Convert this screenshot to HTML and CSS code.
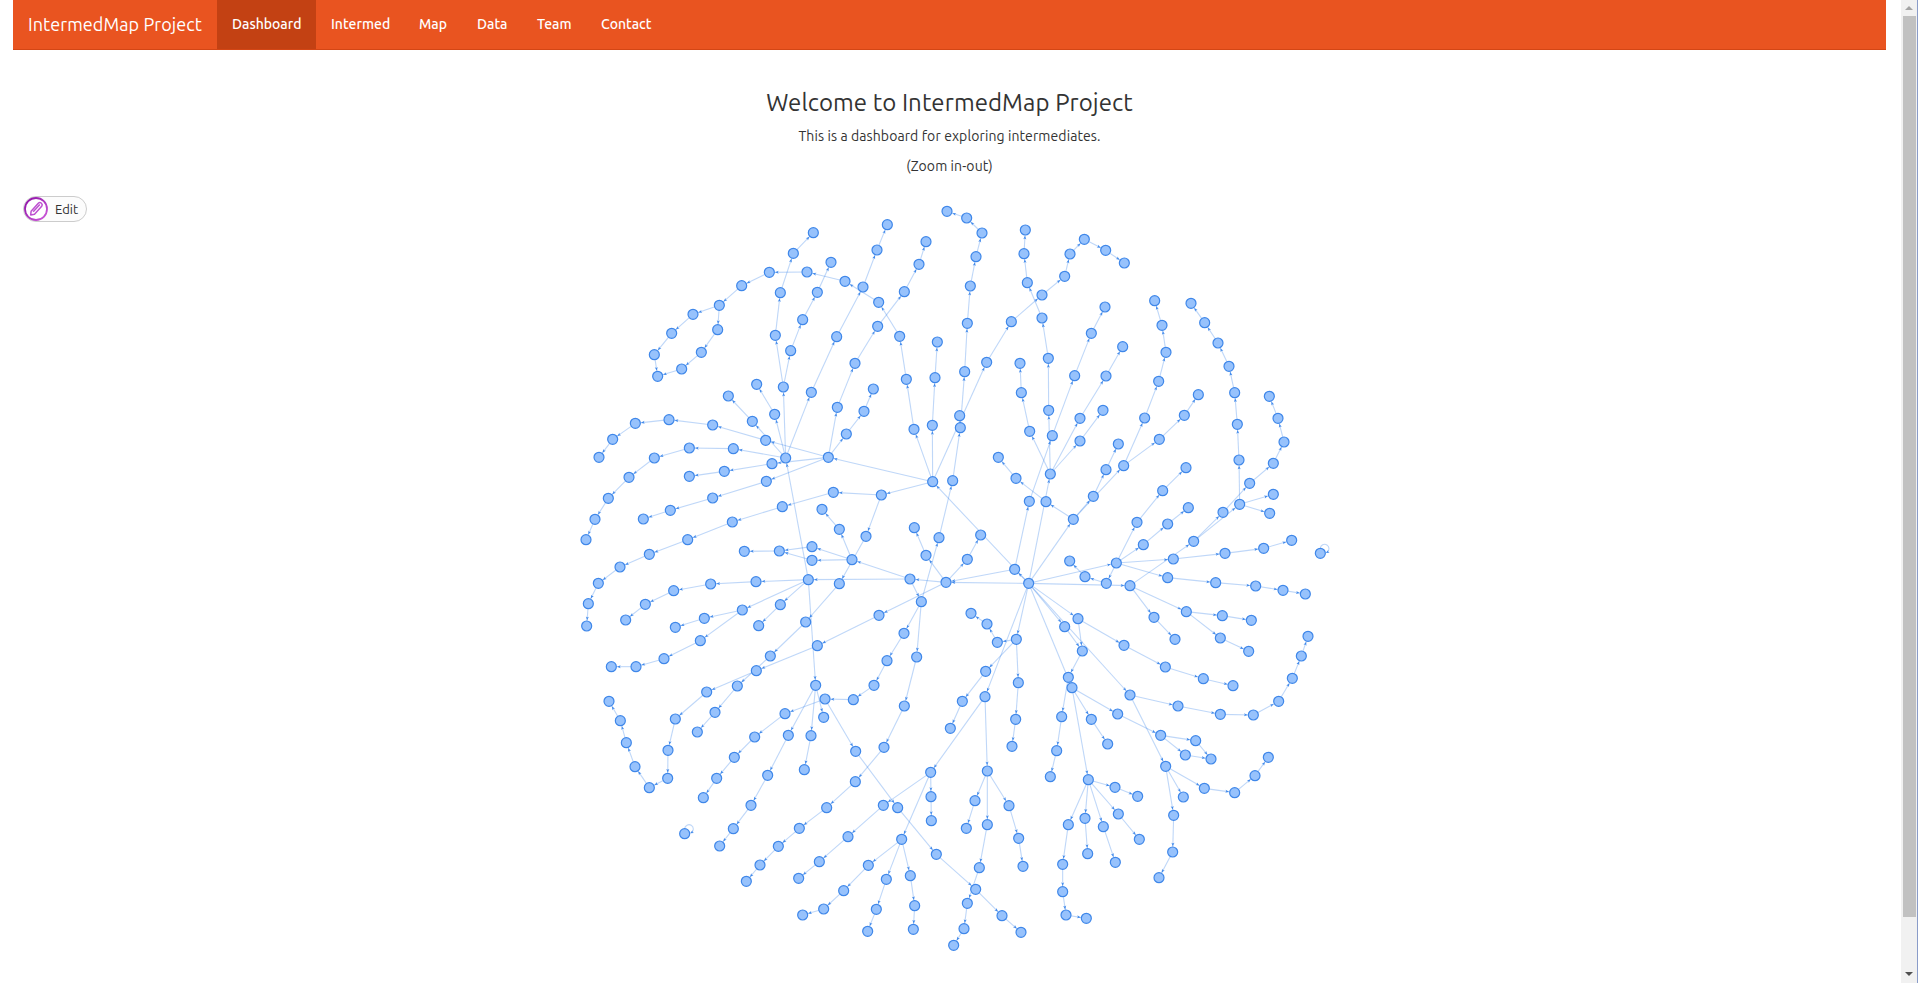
FILE: index.html
```
<!DOCTYPE html>
<html lang="en">
<head>
<meta charset="utf-8">
<title>IntermedMap Project</title>
<link rel="stylesheet" href="styles.css">
</head>
<body>
<div class="window">
  <div class="page">
    <nav class="navbar">
      <a class="brand"><span>IntermedMap Project</span></a>
      <a class="tab active"><span>Dashboard</span></a>
      <a class="tab intermed"><span>Intermed</span></a>
      <a class="tab map"><span>Map</span></a>
      <a class="tab data"><span>Data</span></a>
      <a class="tab team"><span>Team</span></a>
      <a class="tab contact"><span>Contact</span></a>
    </nav>
    <header class="intro">
      <h3>Welcome to IntermedMap Project</h3>
      <p class="lead">This is a dashboard for exploring intermediates.</p>
      <p class="hint">(Zoom in-out)</p>
    </header>
    <main class="network">
      <svg id="graph" class="graph" viewBox="-1641 0 5619 2340"></svg>
      <button class="edit" type="button">
        <svg class="pencil" viewBox="0 0 24 24">
          <defs><linearGradient id="violet" x1="0" y1="0" x2="1" y2="1"><stop offset="0" stop-color="#8b0fa5"/><stop offset="1" stop-color="#cf5ddb"/></linearGradient></defs>
          <circle cx="12" cy="12" r="11" fill="#fff" stroke="url(#violet)" stroke-width="1.8"/>
          <path d="M6.7 17.9l.4-3.6 7.2-8c.8-.9 2-1 2.8-.3l.5.5c.8.8.8 1.8.1 2.7l-7.2 8zM9.2 14.8l6.6-7.2" fill="none" stroke="#bd50d0" stroke-width="1.5" stroke-linejoin="round"/>
        </svg>
        <span>Edit</span>
      </button>
    </main>
  </div>
  <div class="scrollbar">
    <i class="arrow up"></i>
    <div class="thumb"></div>
    <i class="arrow down"></i>
  </div>
</div>
<script src="graph.js"></script>
</body>
</html>
```
FILE: styles.css
```
* { box-sizing: border-box; }
body {
  margin: 0;
  background: #fff;
  color: #333;
  font-family: Ubuntu, "Noto Sans", sans-serif;
  font-size: 14px;
  overflow: hidden;
}
.window { display: flex; height: 983px; }
.page { flex: 1; padding: 0 15px 0 13px; overflow: hidden; }
.navbar {
  display: flex;
  height: 50px;
  background: #e95420;
  border-bottom: 1px solid #d34615;
  color: #fff;
}
.navbar a { display: flex; padding: 14px 0 0 15px; line-height: 20px; white-space: nowrap; }
.navbar .brand { width: 204px; font-size: 18px; letter-spacing: 0.1px; }
.tab { font-weight: 500; }
.active { width: 99px; background: #c34113; }
.intermed { width: 88px; }
.map { width: 58px; }
.data { width: 60px; }
.team { width: 64px; }
.contact { width: 82px; }
.intro { height: 140px; padding-top: 39px; text-align: center; }
.intro h3 { margin: 0; font-size: 24px; font-weight: 400; line-height: 28px; letter-spacing: 0.08px; }
.intro p { margin: 0; line-height: 20px; letter-spacing: 0.1px; }
.intro .lead { margin-top: 9px; }
.intro .hint { margin-top: 10px; }
.network { position: relative; height: 793px; }
.graph { display: block; width: 1873px; height: 780px; }
.edge { stroke: #2b7ce9; stroke-opacity: 0.3; stroke-width: 3.3; fill: none; }
.tip { fill: #2b7ce9; fill-opacity: 0.85; }
.node { fill: #97c2fc; stroke: #3f87e9; stroke-width: 3.6; }
.edit {
  position: absolute;
  left: 10px;
  top: 6px;
  display: flex;
  align-items: center;
  width: 64px;
  height: 26px;
  padding: 0;
  border: 1px solid #ccc;
  border-radius: 13px;
  background: #fcfcfc;
  color: #333;
  font: 13px/24px Ubuntu, "Noto Sans", sans-serif;
}
.pencil { width: 24px; height: 24px; margin-right: 7px; flex: none; }
.scrollbar {
  display: flex;
  flex-direction: column;
  align-items: center;
  width: 17px;
  background: #f1f1f1;
  border-right: 1px solid #8a9cc9;
}
.thumb { width: 13px; height: 901px; margin: 0 0 55px 1px; background: #c1c1c1; }
.arrow { width: 0; height: 0; border: 4px solid transparent; }
.up { margin: 2px 0 6px; border-bottom-color: #a3a3a3; }
.down { border-top-color: #505050; }
```
FILE: graph.js
```
// Each line is a directed path; every "x,y" pair is one node.
const paths = `
1406,1180 1364,1138 1158,1177 1050,1167 745,1169 677,804
1406,1180 1158,1177
1406,1180 1118,875
1118,875 805,802
1118,875 964,915
1050,1167 876,1109
1050,1167 1084,1235
1158,1177 1222,1108 1262,1035
1084,1235 1137,1043 1178,872 1201,713 1214,545 1222,400 1231,288 1248,200 1266,129 1220,84 1161,64
1201,713 1199,677
1118,875 1280,517 1354,395 1446,315 1514,259 1530,192 1573,148 1637,181 1693,219
1118,875 1117,706 1125,563 1132,456
1118,875 1062,718 1039,568 1019,439 956,337 855,274 741,246 628,247 545,287 478,346 399,373 335,430 283,494 293,559
478,346 473,419 424,487 365,537 293,559
805,802 832,652 885,520 953,409 1033,305 1077,223 1098,155
805,802 859,732 912,664 940,597
677,804 754,607 830,440 909,291 951,180 982,104
677,804 670,591 692,482 728,389 772,307 813,217
670,591 646,436 661,308 700,190 760,128
677,804 644,673 590,583
677,804 577,694 505,618
805,802 617,751 458,705 327,689 226,700 158,748 117,802
677,804 520,776 388,774 283,804 207,862 145,925 105,988 78,1049
805,802 636,821 493,844 388,859
805,802 619,874 458,924 331,961 250,987
964,915 820,907 667,950 517,996 383,1049 268,1093 180,1131 115,1180 85,1241 80,1308
964,915 918,1039
918,1039 838,1181 737,1296 631,1398 532,1488 465,1567 412,1626
876,1109 838,1018 786,958
876,1109 756,1070 658,1083 553,1084
876,1109 756,1111 658,1083
745,1169 588,1175 452,1182 341,1202 256,1243 197,1290
745,1169 661,1244 596,1307
745,1169 547,1260 433,1285 346,1312
547,1260 421,1352 312,1406 228,1430 154,1430
745,1169 767,1486
1158,1177 957,1276 772,1367 589,1442 440,1506 346,1587 324,1681 323,1765 268,1793 225,1730 199,1658 181,1592 147,1534
1158,1177 1098,1096 1063,1013
1084,1235 1032,1330 981,1412 942,1486 880,1529 795,1527 675,1571 584,1641 523,1702 470,1765 430,1823
1084,1235 1070,1401 1033,1548 972,1672 886,1775 800,1853 718,1915 655,1969 600,2025 559,2074
767,1486 685,1636 623,1756 573,1846 520,1916 479,1968
767,1486 753,1637 733,1739
767,1486 791,1582
795,1527 887,1684 1013,1853 1129,1993 1247,2098 1326,2177 1383,2227
1364,1138 1408,934 1477,737 1544,557 1594,430 1635,351
1406,1180 1471,852 1409,724 1384,608 1380,520
1471,852 1466,661 1465,505 1446,384 1402,278 1392,191 1396,120
1471,852 1560,685 1638,558 1688,470
1471,852 1560,753 1629,661
1406,1180 1540,988 1458,935 1368,865 1315,802
1540,988 1600,919 1638,839 1675,762
1540,988 1691,827
1691,827 1754,684 1796,574 1818,487 1806,406 1784,332
1691,827 1798,748 1873,676 1915,614
1406,1180 1669,1119 1731,997 1808,902 1878,833
1669,1119 1750,1064 1823,1002 1885,953
1669,1119 1840,1107 1995,1090 2111,1075 2195,1051
1669,1119 1823,1163 1967,1178 2087,1188 2169,1201 2236,1212
1669,1119 1639,1180 1575,1160 1529,1113
1406,1180 1710,1187 1901,1054 1989,967
1901,1054 2039,943
1989,967 2069,880 2140,820 2172,756 2154,685 2128,619
2039,943 2037,810 2032,703 2024,608 2007,529 1974,459 1934,398 1893,340
2039,943 2140,913
2039,943 2129,970
1710,1187 1782,1282 1845,1348
1710,1187 1879,1265 1987,1277 2074,1291
1879,1265 1981,1344 2066,1384
1406,1180 1554,1286 1692,1366 1816,1431 1930,1466 2019,1487
1554,1286 1567,1383
1406,1180 1514,1310 1567,1383 1525,1462 1505,1580 1490,1682 1471,1760
1406,1180 1710,1515
1406,1180 1536,1493
1536,1493 1673,1572 1802,1636 1907,1652 1953,1707
1802,1636 1876,1695 1953,1707
1536,1493 1594,1588 1643,1662
1536,1493 1585,1769 1665,1792 1733,1819
1585,1769 1675,1872 1738,1948
1585,1769 1630,1910 1666,2017
1585,1769 1575,1885 1583,1991
1585,1769 1525,1904 1508,2023 1508,2105 1518,2175 1579,2185
1710,1515 1854,1548 1981,1573 2080,1575 2156,1534 2197,1465 2224,1398 2244,1339
1710,1515 1817,1729 1933,1795 2024,1808 2085,1757 2125,1702
1817,1729 1870,1821
1817,1729 1841,1876 1838,1986 1797,2063
1406,1180 1369,1348 1312,1357 1281,1302 1233,1270
1369,1348 1277,1444 1207,1534 1171,1615
1369,1348 1375,1478 1367,1588 1356,1669
1406,1180 1275,1520 1112,1747 1113,1820 1114,1892
1275,1520 1282,1743 1245,1832 1219,1915
1282,1743 1282,1904 1258,2033 1222,2140 1212,2216 1181,2266
1282,1743 1347,1847 1376,1945 1389,2029
1112,1747 970,1846 864,1940 778,2015 716,2065
1112,1747 1025,1948 925,2026 851,2102 791,2157 728,2175
1025,1948 979,2068 949,2158 923,2224
1025,1948 1051,2057 1064,2147 1060,2218
`;
const loops = [[2281, 1090], [374, 1931]];

const svg = document.getElementById('graph');
function draw(tag, cls, attrs) {
  const el = document.createElementNS('http://www.w3.org/2000/svg', tag);
  el.setAttribute('class', cls);
  for (const key in attrs) el.setAttribute(key, attrs[key]);
  svg.appendChild(el);
}
function tip(x, y, angle) {
  draw('path', 'tip', {
    d: 'M0 0L-11 4.5L-8.5 0L-11 -4.5Z',
    transform: `translate(${x} ${y}) rotate(${angle * 180 / Math.PI})`
  });
}

const nodes = new Map();
const edges = [];
for (const line of paths.trim().split('\n')) {
  const points = line.split(' ').map(pair => {
    const point = pair.split(',').map(Number);
    nodes.set(pair, point);
    return point;
  });
  for (let i = 1; i < points.length; i++) edges.push([points[i - 1], points[i]]);
}
for (const [[x1, y1], [x2, y2]] of edges) {
  draw('line', 'edge', { x1, y1, x2, y2 });
}
for (const [[x1, y1], [x2, y2]] of edges) {
  const a = Math.atan2(y2 - y1, x2 - x1);
  tip(x2 - 17 * Math.cos(a), y2 - 17 * Math.sin(a), a);
}
for (const [x, y] of loops) {
  draw('path', 'edge', { d: `M${x} ${y - 15}A13 13 0 1 1 ${x + 20} ${y - 3}` });
  tip(x + 16, y - 1, Math.PI * 0.85);
  nodes.set(`${x},${y}`, [x, y]);
}
for (const [cx, cy] of nodes.values()) draw('circle', 'node', { cx, cy, r: 15 });
```
